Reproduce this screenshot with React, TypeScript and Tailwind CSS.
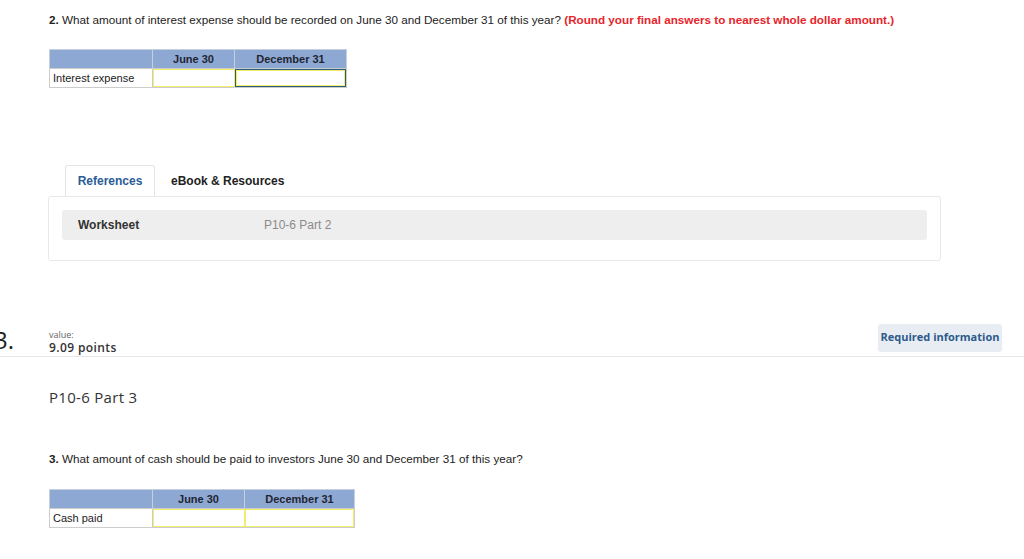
import React from "react";

const arial = "font-['Liberation_Sans',Arial,sans-serif]";
const open = "font-['Open_Sans','Noto_Sans',sans-serif]";

type AnswerTableProps = {
  label: string;
  widths: [number, number, number];
  focusLast?: boolean;
};

const AnswerTable = ({ label, widths, focusLast }: AnswerTableProps) => {
  const [w1, w2, w3] = widths;
  return (
    <div className={`inline-flex flex-col ${arial} text-[11px]`}>
      <div className="flex h-[19px] bg-[#8ea8d4] border border-[#c5cfdd] border-b-0">
        <div style={{ width: w1 }} className="border-r border-[#c5cfdd]" />
        <div style={{ width: w2 }} className="border-r border-[#c5cfdd] flex items-center justify-center font-bold text-[#1f2530]">
          June 30
        </div>
        <div style={{ width: w3 }} className="flex items-center justify-center font-bold text-[#1f2530]">
          December 31
        </div>
      </div>
      <div className="flex h-[20px] border border-[#cccccc]">
        <div style={{ width: w1 }} className="border-r border-[#cccccc] flex items-center pl-[3px] text-[#222]">
          {label}
        </div>
        <div style={{ width: w2 }} className="border border-[#f2ee6c] bg-white" />
        <div
          style={{ width: w3 }}
          className={
            focusLast
              ? "border border-[#285f78] shadow-[inset_0_0_0_1px_#f2ee6c] bg-white"
              : "border border-[#f2ee6c] bg-white"
          }
        />
      </div>
    </div>
  );
};

export default function App() {
  return (
    <div className={`w-[1024px] h-[559px] overflow-hidden bg-white ${arial} text-[#222]`}>
      <div className="pl-[49px] pt-[12px]">
        <p className="text-[11.7px] leading-[15px]">
          <span className="font-bold">2.</span> What amount of interest expense should be recorded on June 30 and December 31 of this year?{" "}
          <span className="font-bold text-[#e8242b]">(Round your final answers to nearest whole dollar amount.)</span>
        </p>
        <div className="mt-[22px]">
          <AnswerTable label="Interest expense" widths={[103, 82, 111]} focusLast />
        </div>
      </div>

      {/* references */}
      <div className="mt-[77px] pl-[48px] w-[941px]">
        <div className="flex pl-[17px] text-[12px] font-bold">
          <div className="relative z-10 h-[31px] w-[90px] flex items-center justify-center border border-b-0 border-[#e5e5e5] rounded-t-[3px] bg-white text-[#2b5c98] -mb-px">
            References
          </div>
          <div className="h-[31px] flex items-center pl-[16px] text-[#222]">eBook &amp; Resources</div>
        </div>
        <div className="border border-[#e8e8e8] rounded-[3px] p-[13px] h-[65px]">
          <div className="h-[30px] bg-[#eeeeee] rounded-[3px] flex items-center text-[12px]">
            <span className="pl-[16px] w-[202px] font-bold text-[#333]">Worksheet</span>
            <span className="text-[#8a8a8a]">P10-6 Part 2</span>
          </div>
        </div>
      </div>

      {/* question 3 header */}
      <div className="mt-[62px] flex items-center h-[34px] border-b border-[#e6e6e6]">
        <div className={`w-[40px] -ml-[6px] text-[24px] leading-none text-[#222] ${open}`}>3.</div>
        <div className={`flex-1 ml-[15px] pt-[4px] ${open}`}>
          <div className="text-[9px] leading-[12px] text-[#666]">value:</div>
          <div className="text-[12px] leading-[14px] font-semibold tracking-[0.4px] text-[#333]">9.09 points</div>
        </div>
        <div className={`mr-[22px] mb-[4px] h-[28px] w-[124px] flex items-center justify-center whitespace-nowrap rounded-[3px] bg-[#e8edf3] text-[#2d5a8c] text-[11px] font-bold ${open}`}>
          Required information
        </div>
      </div>

      <div className="pl-[49px]">
        <h2 className={`mt-[31px] text-[15px] leading-[18px] font-medium tracking-[0.3px] text-[#333] ${open}`}>P10-6 Part 3</h2>
        <p className="mt-[45px] text-[11.7px] leading-[15px]">
          <span className="font-bold">3.</span> What amount of cash should be paid to investors June 30 and December 31 of this year?
        </p>
        <div className="mt-[23px]">
          <AnswerTable label="Cash paid" widths={[103, 92, 109]} />
        </div>
      </div>
    </div>
  );
}
